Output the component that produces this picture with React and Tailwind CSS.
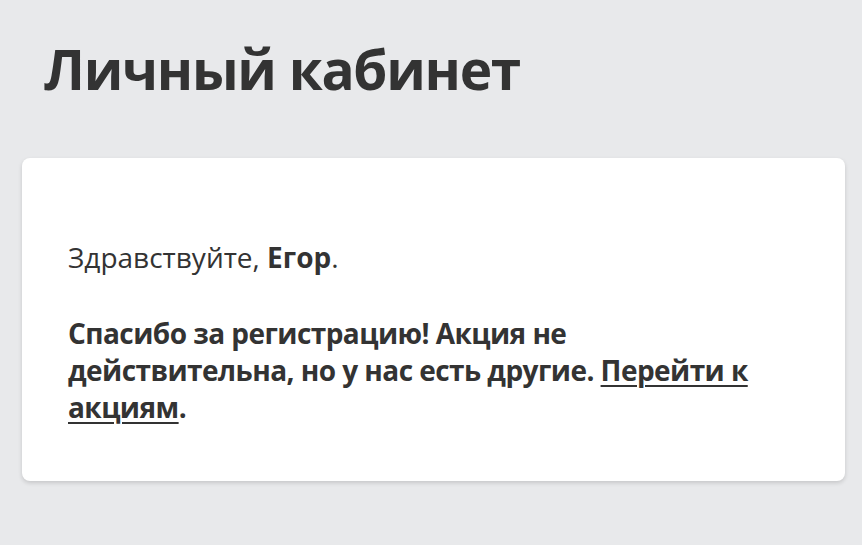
export default function App() {
  return (
    <div className="min-h-[545px] w-full bg-[#e8e9eb] text-[#333333]" style={{ fontFamily: '"Open Sans", "Noto Sans", sans-serif' }}>
      <div className="pl-[22px] pr-[17px] pt-[34px] pb-[60px]">
        <h1 className="ml-[22px] text-[55px] font-bold leading-[70px] tracking-[-1.3px]">Личный кабинет</h1>
        <div className="mt-[54px] rounded-[8px] bg-white pl-[46px] pr-[40px] pt-[81px] pb-[55px] shadow-[0_2px_4px_rgba(0,0,0,0.15)]">
          <p className="text-[28px] leading-[37px]">
            Здравствуйте, <span className="font-bold">Егор</span>.
          </p>
          <p className="mt-[39px] max-w-[700px] text-[28px] font-bold leading-[37px] tracking-[-0.55px]">
            Спасибо за регистрацию! Акция не действительна, но у нас есть другие.{' '}
            <a href="#" className="underline decoration-2 underline-offset-4">Перейти к акциям</a>.
          </p>
        </div>
      </div>
    </div>
  );
}
